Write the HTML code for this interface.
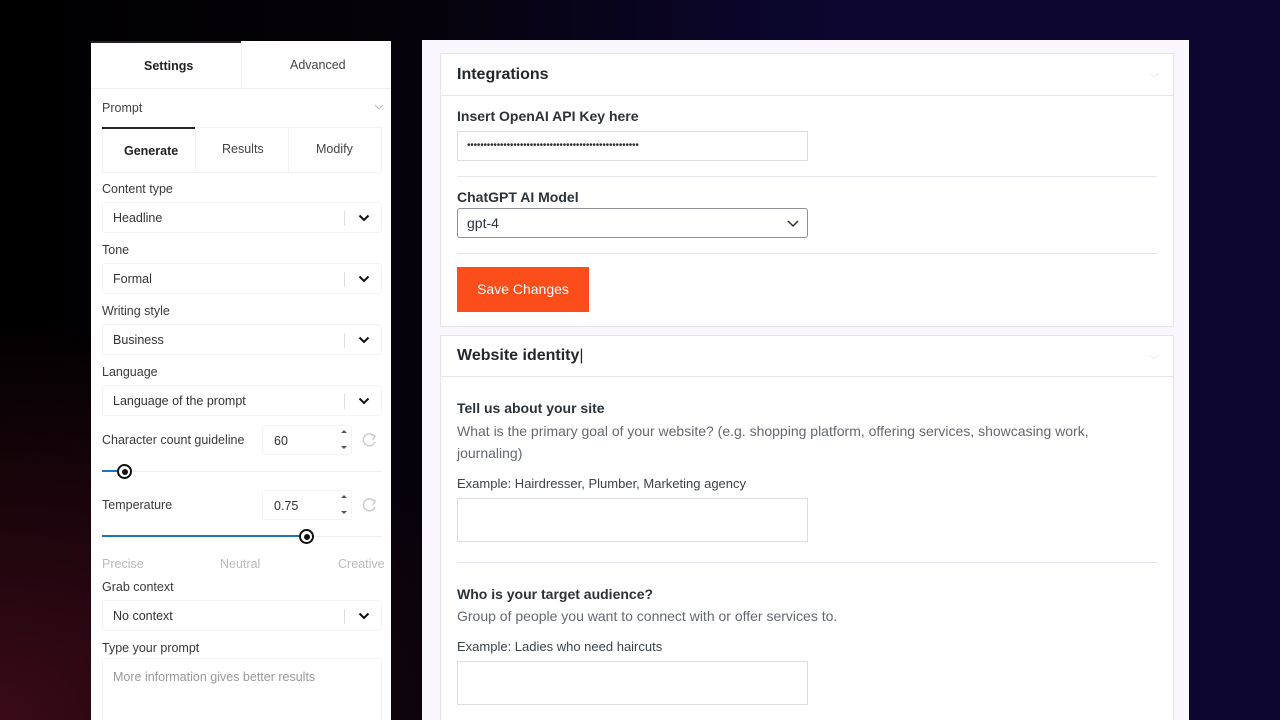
<!DOCTYPE html>
<html style="width:1280px;height:720px;overflow:hidden"><head><meta charset="utf-8"><style>
*{box-sizing:border-box;margin:0;padding:0}
body{width:1280px;height:720px;overflow:hidden;position:relative;font-family:"Liberation Sans",sans-serif;
background:radial-gradient(ellipse 500px 400px at 0px 720px,#3a0a18 0%,rgba(40,5,15,0) 100%),linear-gradient(90deg,#000 0%,#050208 30%,#0c0630 65%,#0c0630 100%);}
.a{position:absolute}
.lp{left:91px;top:41px;width:300px;height:679px;background:#fff;overflow:hidden}
.lab{position:absolute;left:11px;font-size:12.5px;color:#3a3a3a}
.sel{position:absolute;left:11px;width:280px;height:31px;border:1px solid #f3f3f3;border-radius:3px;font-size:12.5px;color:#333;padding:8px 10px}
.sel .sep{position:absolute;right:36px;top:8px;width:1px;height:15px;background:#ddd}
.sel svg{position:absolute;right:11px;top:11px}
.rp{left:422px;top:40px;width:767px;height:680px;background:#f9f7fd;overflow:hidden}
.card{position:absolute;left:18px;width:734px;background:#fff;border:1px solid #e6e4ea}
.ch{height:42px;border-bottom:1px solid #e6e4ea;font-size:16px;font-weight:bold;color:#23282d;padding:12px 16px}
.bl{position:absolute;left:16px;font-size:14px;font-weight:bold;color:#2c3338}
.inp{position:absolute;left:16px;width:351px;border:1px solid #dcdcde;background:#fff}
.hr{position:absolute;left:16px;right:16px;height:1px;background:#e6e4ea}
.d{position:absolute;left:16px;font-size:14px;color:#646970}
.num{position:absolute;left:171px;width:90px;height:30px;border:1px solid #f3f3f3;border-radius:3px;font-size:12.5px;color:#333;padding:8px 11px}
</style></head><body>
<div class="a lp">
 <div class="a" style="left:0;top:0;width:150px;height:2px;background:#222"></div>
 <div class="a" style="left:150px;top:0;width:1px;height:47px;background:#eee"></div>
 <div class="a" style="left:0;top:47px;width:300px;height:1px;background:#eee"></div>
 <div class="a" style="left:53px;top:18px;font-size:12.5px;font-weight:bold;color:#222">Settings</div>
 <div class="a" style="left:199px;top:17px;font-size:12.5px;color:#444">Advanced</div>
 <div class="a" style="left:11px;top:60px;font-size:12.5px;color:#444">Prompt</div>
 <svg class="a" style="left:283px;top:63px" width="10" height="7"><path d="M1 1l4 4 4-4" stroke="#bbb" fill="none"/></svg>
 <div class="a" style="left:11px;top:86px;width:280px;height:46px;border:1px solid #f3f3f3"></div>
 <div class="a" style="left:11px;top:86px;width:93px;height:2px;background:#222"></div>
 <div class="a" style="left:104px;top:87px;width:1px;height:45px;background:#f3f3f3"></div>
 <div class="a" style="left:197px;top:87px;width:1px;height:45px;background:#f3f3f3"></div>
 <div class="a" style="left:33px;top:103px;font-size:12.5px;font-weight:bold;color:#222">Generate</div>
 <div class="a" style="left:131px;top:101px;font-size:12.5px;color:#444">Results</div>
 <div class="a" style="left:225px;top:101px;font-size:12.5px;color:#444">Modify</div>
 <div class="lab" style="top:141px">Content type</div>
 <div class="sel" style="top:161px">Headline<div class="sep"></div><svg width="12" height="8"><path d="M1.5 1.5l4.5 4.5 4.5-4.5" stroke="#111" stroke-width="2" fill="none"/></svg></div>
 <div class="lab" style="top:202px">Tone</div>
 <div class="sel" style="top:222px">Formal<div class="sep"></div><svg width="12" height="8"><path d="M1.5 1.5l4.5 4.5 4.5-4.5" stroke="#111" stroke-width="2" fill="none"/></svg></div>
 <div class="lab" style="top:263px">Writing style</div>
 <div class="sel" style="top:283px">Business<div class="sep"></div><svg width="12" height="8"><path d="M1.5 1.5l4.5 4.5 4.5-4.5" stroke="#111" stroke-width="2" fill="none"/></svg></div>
 <div class="lab" style="top:324px">Language</div>
 <div class="sel" style="top:344px">Language of the prompt<div class="sep"></div><svg width="12" height="8"><path d="M1.5 1.5l4.5 4.5 4.5-4.5" stroke="#111" stroke-width="2" fill="none"/></svg></div>
 <div class="lab" style="top:392px">Character count guideline</div>
 <div class="num" style="top:384px">60</div>
 <svg class="a" style="left:248px;top:386px" width="10" height="26"><path d="M2 6l3-3 3 3zM2 19l3 3 3-3z" fill="#555"/></svg>
 <svg class="a" style="left:271px;top:391px" width="16" height="16"><path d="M12 4A6 6 0 1 0 13 10" stroke="#ccc" stroke-width="1.5" fill="none"/><path d="M9 2l4 2-2 4" stroke="#ccc" stroke-width="1.5" fill="none"/></svg>
 <div class="a" style="left:11px;top:430px;width:280px;height:1px;background:#eee"></div>
 <div class="a" style="left:11px;top:429px;width:22px;height:2px;background:#1e73be"></div>
 <div class="a" style="left:26px;top:423px;width:15px;height:15px;border-radius:50%;border:2px solid #111;background:#fff"><div class="a" style="left:2.5px;top:2.5px;width:6px;height:6px;border-radius:50%;background:#111"></div></div>
 <div class="lab" style="top:457px">Temperature</div>
 <div class="num" style="top:449px">0.75</div>
 <svg class="a" style="left:248px;top:451px" width="10" height="26"><path d="M2 6l3-3 3 3zM2 19l3 3 3-3z" fill="#555"/></svg>
 <svg class="a" style="left:271px;top:456px" width="16" height="16"><path d="M12 4A6 6 0 1 0 13 10" stroke="#ccc" stroke-width="1.5" fill="none"/><path d="M9 2l4 2-2 4" stroke="#ccc" stroke-width="1.5" fill="none"/></svg>
 <div class="a" style="left:11px;top:495px;width:280px;height:1px;background:#eee"></div>
 <div class="a" style="left:11px;top:494px;width:205px;height:2px;background:#1e73be"></div>
 <div class="a" style="left:208px;top:488px;width:15px;height:15px;border-radius:50%;border:2px solid #111;background:#fff"><div class="a" style="left:2.5px;top:2.5px;width:6px;height:6px;border-radius:50%;background:#111"></div></div>
 <div class="a" style="left:11px;top:516px;font-size:12.5px;color:#bbb">Precise</div>
 <div class="a" style="left:129px;top:516px;font-size:12.5px;color:#bbb">Neutral</div>
 <div class="a" style="left:247px;top:516px;font-size:12.5px;color:#bbb">Creative</div>
 <div class="lab" style="top:539px">Grab context</div>
 <div class="sel" style="top:559px">No context<div class="sep"></div><svg width="12" height="8"><path d="M1.5 1.5l4.5 4.5 4.5-4.5" stroke="#111" stroke-width="2" fill="none"/></svg></div>
 <div class="lab" style="top:600px">Type your prompt</div>
 <div class="a" style="left:11px;top:617px;width:280px;height:62px;border:1px solid #f3f3f3;border-bottom:none;border-radius:3px 3px 0 0;font-size:12.5px;color:#999;padding:11px 10px">More information gives better results</div>
</div>
<div class="a rp">
 <div class="card" style="top:13px;height:274px">
  <div class="ch">Integrations</div>
  <svg class="a" style="right:13px;top:18px" width="12" height="7"><path d="M1 1l5 4 5-4" stroke="#eee" fill="none"/></svg>
  <div class="bl" style="top:54px">Insert OpenAI API Key here</div>
  <div class="inp" style="top:77px;height:30px;font-size:10px;letter-spacing:-0.2px;padding:8px 9px;color:#333;overflow:hidden;white-space:nowrap">••••••••••••••••••••••••••••••••••••••••••••••••••••</div>
  <div class="hr" style="top:122px"></div>
  <div class="bl" style="top:135px">ChatGPT AI Model</div>
  <div class="inp" style="top:154px;height:30px;border-color:#8c8f94;border-radius:3px;font-size:14px;color:#2c3338;padding:6px 9px">gpt-4<svg class="a" style="right:8px;top:11px" width="12" height="8"><path d="M1 1l5 5 5-5" stroke="#333" stroke-width="1.5" fill="none"/></svg></div>
  <div class="hr" style="top:199px"></div>
  <div class="a" style="left:16px;top:213px;width:132px;height:45px;background:#fc4e1a;color:#fff;font-size:14px;text-align:center;line-height:45px">Save Changes</div>
 </div>
 <div class="card" style="top:295px;height:385px;border-bottom:none">
  <div class="ch" style="height:41px;padding-top:11px">Website identity<span style="font-weight:normal">|</span></div>
  <svg class="a" style="right:13px;top:18px" width="12" height="7"><path d="M1 1l5 4 5-4" stroke="#eee" fill="none"/></svg>
  <div class="bl" style="top:64px">Tell us about your site</div>
  <div class="d" style="top:84px;width:680px;line-height:22px">What is the primary goal of your website? (e.g. shopping platform, offering services, showcasing work, journaling)</div>
  <div class="d" style="top:140px;font-size:13px;color:#3c434a">Example: Hairdresser, Plumber, Marketing agency</div>
  <div class="inp" style="top:162px;height:44px"></div>
  <div class="hr" style="top:226px"></div>
  <div class="bl" style="top:250px">Who is your target audience?</div>
  <div class="d" style="top:272px">Group of people you want to connect with or offer services to.</div>
  <div class="d" style="top:303px;font-size:13px;color:#3c434a">Example: Ladies who need haircuts</div>
  <div class="inp" style="top:325px;height:44px"></div>
 </div>
</div>
</body></html>
